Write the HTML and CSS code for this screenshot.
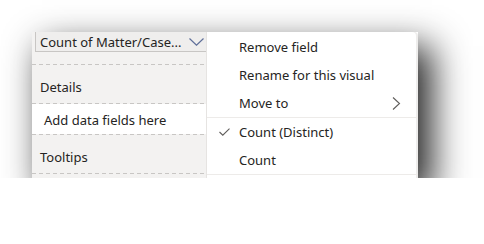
FILE: index.html
```html
<!DOCTYPE html>
<html>
<head>
<meta charset="utf-8">
<link rel="stylesheet" href="styles.css">
</head>
<body>
<div class="frame">
  <div class="wells">
    <div class="pill">
      <span class="pill-text">Count of Matter/Case...</span>
      <svg class="pill-chev" width="15" height="8" viewBox="0 0 15 8"><path d="M0.5 0.5 L7.5 7.2 L14.5 0.5" fill="none" stroke="#5f6f99" stroke-width="1.2"/></svg>
    </div>
    <div class="gap"></div>
    <div class="dash"></div>
    <div class="well-head">Details</div>
    <div class="dash"></div>
    <div class="drop">Add data fields here</div>
    <div class="dash"></div>
    <div class="well-head">Tooltips</div>
    <div class="dash"></div>
  </div>
  <div class="menu">
    <div class="item"><span class="icon"></span>Remove field</div>
    <div class="item"><span class="icon"></span>Rename for this visual</div>
    <div class="item"><span class="icon"></span><span class="label">Move to</span>
      <svg class="sub" width="9" height="13" viewBox="0 0 9 13"><path d="M1 0.5 L7.5 6.5 L1 12.5" fill="none" stroke="#605e5c" stroke-width="1.1"/></svg>
    </div>
    <div class="sep"></div>
    <div class="item"><span class="icon"><svg width="11" height="8" viewBox="0 0 11 8"><path d="M0.5 4 L3.8 7.2 L10.5 0.6" fill="none" stroke="#605e5c" stroke-width="1.1"/></svg></span>Count (Distinct)</div>
    <div class="item"><span class="icon"></span>Count</div>
    <div class="sep"></div>
  </div>
</div>
</body>
</html>
```
FILE: styles.css
```css
html, body {
  margin: 0;
  padding: 0;
  background: #ffffff;
}
body {
  font-family: "Noto Sans", "Open Sans", sans-serif;
  font-size: 13px;
  color: #252423;
}
.frame {
  margin: 32px 0 0 32px;
  width: 386px;
  height: 146px;
  display: flex;
  overflow: hidden;
  box-shadow: 12px 16px 34px 2px rgba(0, 0, 0, 0.85);
}
.wells {
  width: 174px;
  flex: none;
  background: #f3f2f1;
  display: flex;
  flex-direction: column;
}
.pill {
  margin-left: 3px;
  height: 19px;
  border-left: 1px solid #c8c6c4;
  border-bottom: 1px solid #c8c6c4;
  background: #efeeed;
  display: flex;
  align-items: center;
  padding-left: 4px;
  padding-right: 2px;
}
.pill-text {
  flex: 1;
  white-space: nowrap;
  line-height: 18px;
}
.pill-chev {
  display: block;
  margin-top: 1px;
}
.gap {
  height: 12px;
}
.dash {
  height: 1px;
  flex: none;
  background: repeating-linear-gradient(to right, #c8c6c4 0 4px, transparent 4px 7px);
}
.well-head {
  height: 18px;
  line-height: 18px;
  padding: 13px 0 7px 8px;
}
.drop {
  background: #ffffff;
  height: 18px;
  line-height: 18px;
  padding: 7px 0 5px 12px;
}
.menu {
  width: 212px;
  flex: none;
  box-sizing: border-box;
  background: #ffffff;
  border-left: 1px solid #e6e4e2;
  border-top-right-radius: 4px;
  box-shadow: inset -2px 0 0 #eeedec;
  padding-top: 1px;
}
.item {
  height: 28px;
  display: flex;
  align-items: center;
  white-space: nowrap;
}
.icon {
  width: 32px;
  flex: none;
  display: flex;
  justify-content: flex-start;
  padding-left: 12px;
  box-sizing: border-box;
}
.icon svg {
  display: block;
}
.label {
  flex: 1;
}
.sub {
  display: block;
  margin-right: 17px;
}
.sep {
  height: 1px;
  background: #edebe9;
}
```
